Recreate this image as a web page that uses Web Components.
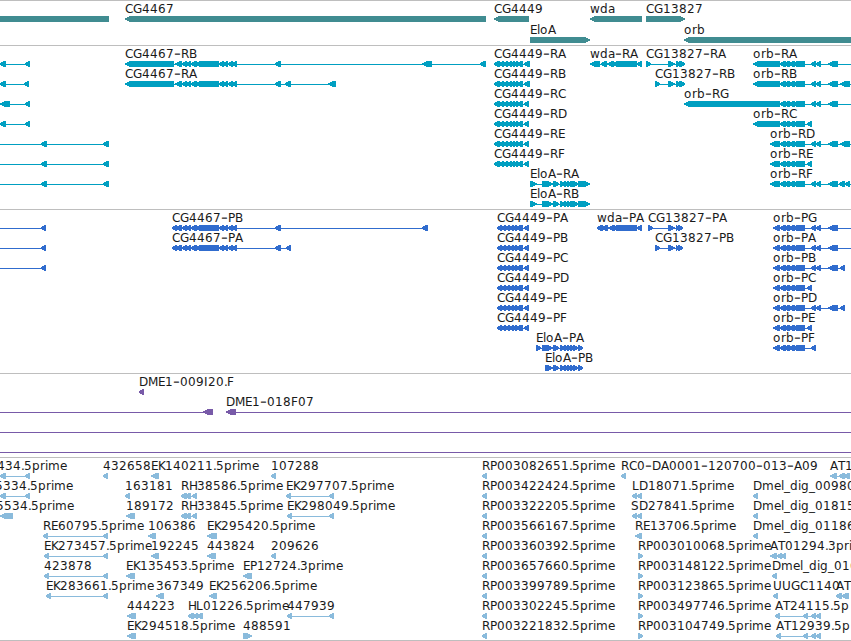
<!DOCTYPE html>
<html lang="en">
<head>
<meta charset="utf-8">
<title>Genome browser tracks</title>
<style>
html, body { margin: 0; background: #fff; overflow: hidden; }
</style>
</head>
<body>
<genome-view></genome-view>

<template id="view-template">
<style>
:host { display: flex; flex-direction: column; width: 851px; height: 641px; overflow: hidden; background: #fff; font: 12px "DejaVu Sans", sans-serif; color: #1a1a1a; }
</style>
<genome-track id="genes" style="--ink:#408c91;--size:45px;--pitch:21px"></genome-track>
<genome-track id="transcripts" style="--ink:#009fc1;--size:164px"></genome-track>
<genome-track id="proteins" style="--ink:#306cce;--size:164px"></genome-track>
<genome-track id="clones" style="--ink:#785aa8;--size:84px"></genome-track>
<genome-track id="reads" style="--ink:#8abbdc;--size:183px"></genome-track>
<genome-track id="end" style="--size:1px"></genome-track>
</template>

<script>
// Whole-pixel advances keep the labels on the pixel grid.
const ADVANCE = { C:8,G:9,R:8,P:7,A:8,B:8,D:9,E:7,F:7,H:8,I:4,K:7,L:7,M:10,S:8,T:7,U:9,
  '-':7,'.':3,'_':6,a:7,b:8,d:8,e:7,g:8,i:3,l:3,m:12,o:8,p:8,r:5,w:10 };

// Each line of a track is one row; features are separated by ";".
// Feature: label | start | direction | spans | optional connector extent
const TRACKS = {};
TRACKS.genes = `
|-9|=|-9-109;CG4467|125|<|125-486;CG4449|494|<|494-529;wda|590|<|590-642;CG13827|646|>|646-685
EloA|530|>|530-590;orb|684|<|684-860`;

const cg = '182-187,186-191,191-197,195-219,219-224,223-228,228-233,232-237,275-281';
const c49 = '499-504,503-508,507-512,510-515,513-518,516-523';
const elo = '530-537,542-548,545-553,553-559,560-565,564-569,567-572,570-575,572-578,578-590';
const orb = '780-786,784-790,788-795,792-805';
const orbX = orb + ',811-816,816-821,828-838';
TRACKS.transcripts = `
|0|<|0-6,25-30;CG4467-RB|125|<|125-174,175-182,${cg},422-432,480-486;CG4449-RA|494|<|494-500,${c49},524-530;wda-RA|590|<|590-600,601-607,607-614,612-637,637-642;CG13827-RA|646|>|646-651,668-675,676-681,679-685;orb-RA|753|<|753-780,${orbX}|753-851
|0|<|0-6,24-29;CG4467-RA|125|<|125-174,175-182,${cg},285-291,328-336;CG4449-RB|494|<|494-500,${c49},524-530;CG13827-RB|655|>|655-660,668-675,676-681,679-685;orb-RB|753|<|753-780,${orbX},840-850|753-851
|0|<|0-10,25-30;CG4449-RC|494|<|494-500,${c49},524-529;orb-RG|684|<|684-780,${orbX}|684-851
|0|<|0-6,25-30;CG4449-RD|494|<|494-500,${c49},524-529;orb-RC|753|<|753-780,${orb},807-812
|0|<|41-47,103-109|0-109;CG4449-RE|494|<|494-500,${c49},524-529;orb-RD|770|<|770-780,${orbX},840-850|770-851
|0|<|41-47,103-109|0-109;CG4449-RF|494|<|494-500,${c49},524-529;orb-RE|770|<|770-780,${orb},807-812
|0|<|41-47,103-109|0-109;EloA-RA|530|>|${elo};orb-RF|770|<|770-780,${orbX},839-845,845-850|770-851
EloA-RB|530|>|${elo}`;

const p49 = '497-502,501-506,505-510,509-514,512-517,515-523,524-529';
const prow = '|0|<|41-46|0-46';
TRACKS.proteins = `
${prow};CG4467-PB|172|<|172-177,176-182,${cg},422-428;CG4449-PA|497|<|${p49};wda-PA|597|<|597-603,602-608,608-615,612-637,637-642;CG13827-PA|648|>|648-653,668-675,676-680,678-683;orb-PG|773|<|773-780,${orbX}|773-851
${prow};CG4467-PA|172|<|172-177,176-182,${cg},286-291;CG4449-PB|497|<|${p49};CG13827-PB|655|>|655-660,668-675,676-680,678-683;orb-PA|773|<|773-780,${orbX}|773-851
${prow};CG4449-PC|497|<|${p49};orb-PB|773|<|773-780,${orbX},840-845
CG4449-PD|497|<|${p49};orb-PC|773|<|773-780,${orb},807-812
CG4449-PE|497|<|${p49};orb-PD|773|<|773-780,${orbX},840-845
CG4449-PF|497|<|${p49};orb-PE|773|<|773-780,${orb},807-812
EloA-PA|536|>|536-541,542-548,545-553,553-559,560-565,564-569,567-572,570-575,573-578,578-583;orb-PF|773|<|773-780,${orb},811-816
EloA-PB|545|>|545-553,553-559,560-565,564-569,567-572,570-575,573-578,578-583`;

TRACKS.clones = `
DME1-009I20.F|139|<|139-144
|0|<|203-213|0-213;DME1-018F07|226|<|226-236|226-851
|0|<||0-851
|0|<||0-851`;

TRACKS.reads = `
434.5prime|-3|<|0-6,25-30;432658|103|<|103-108;EK140211.5prime|151|<|151-159;107288|271|<|271-276;RP003082651.5prime|482|<|482-487;RC0-DA0001-120700-013-A09|621|<|621-626;AT1|830|<|830-837,839-845,844-850
5334.5prime|-5|<|0-6,25-30;163181|125|<|125-130;RH38586.5prime|181|<|181-187,185-191,192-197;EK297707.5prime|286|<|286-291,329-334;RP003422424.5prime|482|<|482-487;LD18071.5prime|632|<|632-637,637-642;Dmel_dig_00980|753|<|753-758
5534.5prime|-4|<|0-13;189172|126|<|126-135;RH33845.5prime|181|<|181-187,185-191,192-197;EK298049.5prime|287|<|287-292,329-334;RP003322205.5prime|482|<|482-487;SD27841.5prime|631|<|632-637,637-642;Dmel_dig_01815|753|<|753-758
RE60795.5prime|43|<|43-48,103-108;106386|148|<|148-156;EK295420.5prime|207|<|207-217;RP003566167.5prime|482|<|482-487;RE13706.5prime|635|<|635-642;Dmel_dig_01186|753|<|753-758
EK273457.5prime|44|<|44-49,103-108;192245|151|<|151-159;443824|207|<|207-216;209626|271|<|271-276;RP003360392.5prime|482|<|482-487;RP003010068.5prime|638|>|638-643;AT01294.3prime|770|<|770-777,777-782,781-786
423878|44|<|44-49,103-108;EK135453.5prime|126|<|126-135;EP12724.3prime|243|<|243-252;RP003657660.5prime|482|<|482-487;RP003148122.5prime|638|>|638-643;Dmel_dig_016|772|<|772-777
EK283661.5prime|46|<|46-51,103-108;367349|156|<|156-164;EK256206.5prime|209|<|209-217;RP003399789.5prime|482|<|482-487;RP003123865.5prime|638|>|638-643;UUGC1140|773|<|773-778;AT|836|<|836-842,841-849
444223|127|<|127-136;HL01226.5prime|188|<|188-194,193-198,197-203;447939|287|<|287-292,329-334;RP003302245.5prime|482|<|482-487;RP003497746.5prime|638|>|638-643;AT24115.5p|775|<|775-780,803-808,811-816,816-821
EK294518.5prime|127|<|127-136;488591|243|>|243-252;RP003221832.5prime|482|<|482-487;RP003104749.5prime|638|>|638-643;AT12939.5p|776|<|776-781,803-808,811-816,816-821`;
TRACKS.end = '';

class FeatureRow extends HTMLElement {
  set features(list) {
    let svg = '';
    for (const text of list.split(';')) {
      const [label, start, dir, spans, extent] = text.split('|');
      const parts = spans ? spans.split(',').map(s => s.match(/(-?\d+)-(\d+)/).slice(1).map(Number)) : [];
      const ends = extent ? extent.split('-').map(Number) : [parts[0][0], parts[parts.length - 1][1]];
      if (extent || parts.length > 1) svg += `<rect x="${ends[0]}" y="18" width="${ends[1] - ends[0]}" height="1"/>`;
      for (const [a, b] of parts) {
        // Short exons get a shorter head, so that some of their full height remains.
        const [far, near] = b - a <= 6 ? [3, 1] : [4, 2];
        if (dir === '=') svg += `<path d="M${a} 15H${b}V21H${a}Z"/>`;
        else if (dir === '<') svg += `<path d="M${b} 15H${a + far}V16H${a + near}V17H${a}V19H${a + near}V20H${a + far}V21H${b}Z"/>`;
        else svg += `<path d="M${a} 15H${b - far}V16H${b - near}V17H${b}V19H${b - near}V20H${b - far}V21H${a}Z"/>`;
      }
      if (label) {
        let x = Number(start);
        const xs = [...label].map(c => { const at = x; x += ADVANCE[c] || 8; return at; });
        // Hyphens are set larger and lower, so that they fill their advance.
        const body = label.replace(/-/g, '<tspan class="dash">-</tspan>');
        const ys = [...label].map(c => c === '-' ? 14 : 12);
        svg += `<text x="${xs.join(' ')}" y="${ys.join(' ')}">${body}</text>`;
      }
    }
    this.attachShadow({ mode: 'open' }).innerHTML = `<style>
      :host { display: block; height: var(--pitch, 20px); }
      svg { display: block; width: 851px; height: 20px; overflow: visible; }
      path, rect { fill: var(--ink); shape-rendering: crispEdges; }
      text { fill: currentColor; font: inherit; white-space: pre; }
      .dash { font-size: 19px; fill: #555; }
    </style><svg>${svg}</svg>`;
  }
}
customElements.define('feature-row', FeatureRow);

class GenomeTrack extends HTMLElement {
  connectedCallback() {
    if (this.shadowRoot) return;
    const root = this.attachShadow({ mode: 'open' });
    root.innerHTML = `<style>
      :host { display: flex; flex-direction: column; flex: none; box-sizing: border-box; height: var(--size); border-top: 1px solid #bebebe; }
      feature-row { flex: none; }
    </style>`;
    for (const line of TRACKS[this.id].trim().split('\n').filter(Boolean)) {
      const row = document.createElement('feature-row');
      row.features = line;
      root.append(row);
    }
  }
}
customElements.define('genome-track', GenomeTrack);

class GenomeView extends HTMLElement {
  connectedCallback() {
    if (this.shadowRoot) return;
    this.attachShadow({ mode: 'open' }).append(document.getElementById('view-template').content.cloneNode(true));
  }
}
customElements.define('genome-view', GenomeView);
</script>
</body>
</html>
